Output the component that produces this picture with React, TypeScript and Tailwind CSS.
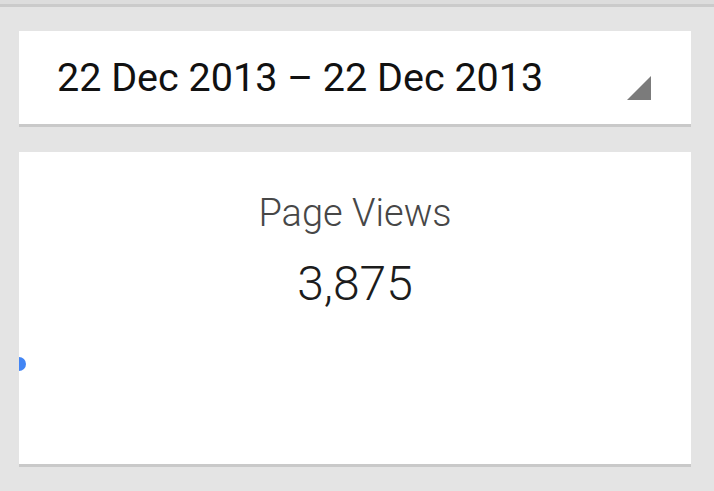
export default function App() {
  return (
    <div
      className="h-[491px] w-full bg-[#e4e4e4] flex flex-col"
      style={{ fontFamily: 'Roboto, "Liberation Sans", sans-serif' }}
    >
      {/* top status strip */}
      <div className="h-[4px] bg-[#dddddd]" />
      <div className="h-[3px] bg-[#cbcbcb]" />

      <div className="pl-[19px] pr-[23px] flex flex-col">
        {/* date range picker */}
        <div className="mt-[24px] h-[96px] bg-white border-b-[3px] border-[#c9c9c9] flex pl-[38px] pr-[40px]">
          <div className="pt-[27px] text-[39.5px] leading-none text-[#111111]">
            22 Dec 2013 – 22 Dec 2013
          </div>
          <svg className="ml-auto mt-[45px]" width="24" height="24" viewBox="0 0 24 24">
            <path d="M24 0 L24 24 L0 24 Z" fill="#7b7b7b" />
          </svg>
        </div>

        {/* metric card */}
        <div className="relative overflow-hidden mt-[25px] h-[315px] bg-white border-b-[3px] border-[#c9c9c9] flex flex-col items-center">
          <div className="mt-[42px] text-[38px] leading-none font-light text-[#474747]">
            Page Views
          </div>
          <div className="mt-[28px] text-[48px] leading-none font-light text-[#1c1c1c]">
            3,875
          </div>
          <div className="absolute left-[-7px] top-[205px] w-[14px] h-[14px] rounded-full bg-[#4285f4]" />
        </div>
      </div>
    </div>
  );
}
